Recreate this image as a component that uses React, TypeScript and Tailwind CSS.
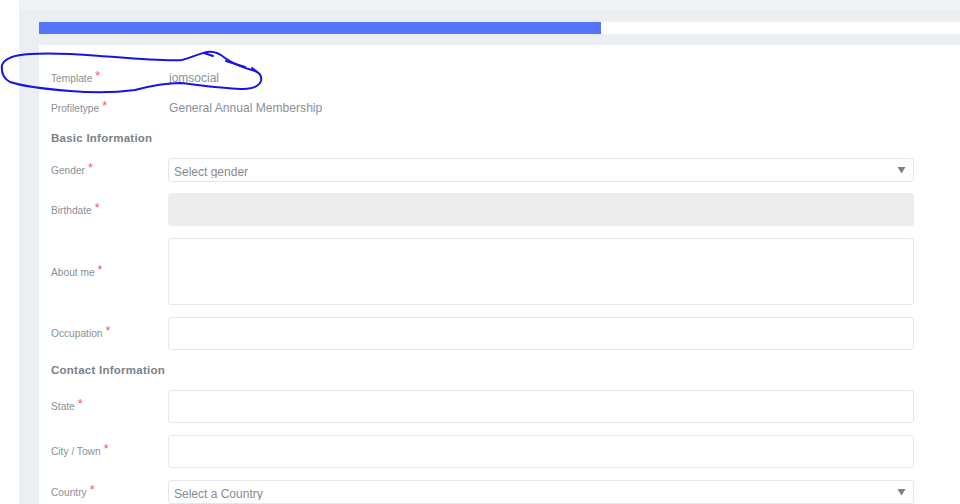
function Label({ text, nudge = '' }: { text: string; nudge?: string }) {
	return (
		<div className={`w-[117px] shrink-0 text-[10.2px] leading-[14px] text-[#8a9197] ${nudge}`}>
			{text}
			<span className="relative -top-[2px] ml-[3px] text-[12.5px] text-[#f0575c]">*</span>
		</div>
	);
}

function TextRow({ label, height, mb, nudge }: { label: string; height: string; mb: string; nudge?: string }) {
	return (
		<div className={`flex items-center ${mb}`}>
			<Label text={label} nudge={nudge} />
			<div className={`w-[746px] ${height} rounded-[3px] border border-[#e5e7e8] bg-white`} />
		</div>
	);
}

function SelectRow({ label, placeholder, mb }: { label: string; placeholder: string; mb: string }) {
	return (
		<div className={`flex items-center ${mb}`}>
			<Label text={label} />
			<div className="flex h-[24px] w-[746px] items-center justify-between rounded-[3px] border border-[#e5e7e8] bg-white pl-[5px] pr-[7px]">
				<span className="relative top-[1px] block h-[13px] overflow-hidden text-[12px] leading-[14px] text-[#858b90]">
					{placeholder}
				</span>
				<svg width="9" height="8" viewBox="0 0 9 8">
					<path d="M0.5 1h8L4.5 7.5z" fill="#7d7f81" />
				</svg>
			</div>
		</div>
	);
}

export default function App() {
	return (
		<div className="relative h-[504px] w-[960px] overflow-hidden bg-white font-['Liberation_Sans',Arial,sans-serif]">
			<div className="ml-[19px] h-full bg-[#eff3f7] pt-[10px]">
				<div className="h-full bg-[#ebeff2] pl-[20px]">
					<div className="pt-[12px]">
						<div className="flex h-[12px] bg-white">
							<div className="w-[562px] bg-[#5674fb]" />
						</div>
					</div>
					<div className="mt-[11px] h-[459px] bg-white pl-[12px] pt-[25px]">
						<div className="mb-[14px] flex h-[16px] items-center">
							<Label text="Template" />
							<span className="ml-[1px] text-[12px] text-[#8a9197]">jomsocial</span>
						</div>
						<div className="mb-[15px] flex h-[16px] items-center">
							<Label text="Profiletype" />
							<span className="ml-[1px] text-[12.1px] text-[#8a9197]">General Annual Membership</span>
						</div>
						<h2 className="mb-[13px] h-[14px] text-[11.5px] leading-[14px] font-bold tracking-[0.25px] text-[#7b8287]">
							Basic Information
						</h2>
						<SelectRow label="Gender" placeholder="Select gender" mb="mb-[11px]" />
						<TextRow label="Birthdate" height="h-[33px] bg-[#ededed]! border-[#ededed]!" mb="mb-[12px]" nudge="pt-[2px]" />
						<TextRow label="About me" height="h-[67px]" mb="mb-[12px]" nudge="pt-[2px]" />
						<TextRow label="Occupation" height="h-[33px]" mb="mb-[13px]" />
						<h2 className="mb-[13px] h-[14px] text-[11.5px] leading-[14px] font-bold tracking-[0.25px] text-[#7b8287]">
							Contact Information
						</h2>
						<TextRow label="State" height="h-[33px]" mb="mb-[12px]" />
						<TextRow label="City / Town" height="h-[33px]" mb="mb-[12px]" />
						<SelectRow label="Country" placeholder="Select a Country" mb="mb-0" />
					</div>
				</div>
			</div>
			{/* pen scribble over the template row */}
			<svg className="absolute left-0 top-0" width="960" height="504" fill="none" stroke="#1414e6" strokeWidth="2" strokeLinecap="round" strokeLinejoin="round">
				<path d="M182 60C190 58 198 54 207 52C214 51 219 53 225 58C232 63 240 67 255 71C260 73 262 76 261 81C259 86 252 89 243 89C228 89 200 85 180 83C165 83 150 86 135 90C120 92 95 93 70 91C45 89 22 86 10 82C3 78 1 72 2 65C4 60 12 55 30 54C60 52 85 55 115 57C140 59 165 61 182 60Z" />
				<path d="M204 53L213 56M226 61L245 67M252 68L256 71" />
			</svg>
		</div>
	);
}
